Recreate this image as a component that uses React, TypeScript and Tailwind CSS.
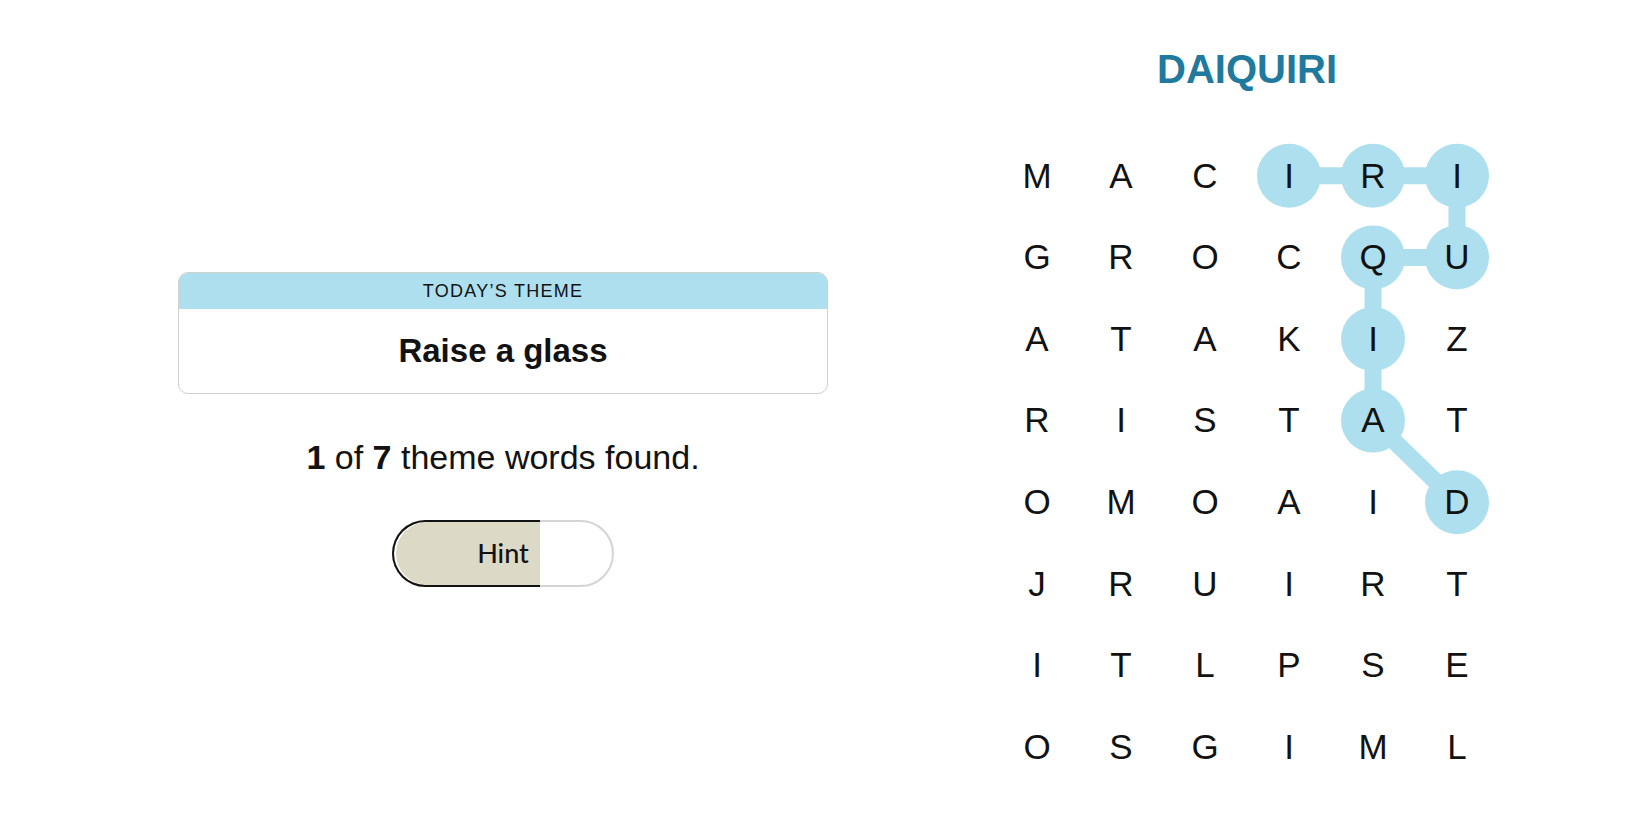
import React from 'react'

const GRID = [
  'MACIRI',
  'GROCQU',
  'ATAKIZ',
  'RISTAT',
  'OMOAID',
  'JRUIRT',
  'ITLPSE',
  'OSGIML',
]

const CW = 84
const RH = 81.6

// path of the found word DAIQUIRI as [row, col]
const FOUND: [number, number][] = [
  [4, 5], [3, 4], [2, 4], [1, 4], [1, 5], [0, 5], [0, 4], [0, 3],
]

const cx = (c: number) => c * CW + CW / 2
const cy = (r: number) => r * RH + RH / 2

function WordPath() {
  return (
    <svg className="absolute inset-0 pointer-events-none" width={CW * 6} height={RH * 8}>
      {FOUND.slice(1).map(([r, c], i) => {
        const [pr, pc] = FOUND[i]
        return <line key={i} x1={cx(pc)} y1={cy(pr)} x2={cx(c)} y2={cy(r)} stroke="#aedfee" strokeWidth={17} />
      })}
      {FOUND.map(([r, c], i) => (
        <circle key={i} cx={cx(c)} cy={cy(r)} r={32} fill="#aedfee" />
      ))}
    </svg>
  )
}

export default function App() {
  return (
    <div className="w-full h-[825px] bg-white flex text-[#121212] font-['Liberation_Sans',Arial,sans-serif]">
      {/* left: theme + hint */}
      <div className="pl-[178px] pt-[272px] w-[995px] shrink-0">
        <div className="w-[650px] flex flex-col items-center">
          <div className="w-full rounded-[10px] border border-[#cfcfcf] overflow-hidden">
            <div className="h-[36px] bg-[#aedfee] flex items-center justify-center text-[18px] tracking-[0.07em] font-medium">
              TODAY’S THEME
            </div>
            <div className="h-[84px] flex items-center justify-center text-[33px] font-bold">
              Raise a glass
            </div>
          </div>
          <div className="mt-[43px] h-[40px] leading-[40px] text-[34px]">
            <b>1</b> of <b>7</b> theme words found.
          </div>
          <button className="relative mt-[43px] w-[222px] h-[67px] rounded-full border-2 border-[#d4d4d4] bg-white">
            <div className="absolute -left-[2px] -top-[2px] -bottom-[2px] w-[148px] rounded-l-full border-2 border-r-0 border-[#121212] bg-[#dcdac6] shadow-[inset_2px_0_0_white]" />
            <span className="relative text-[27px] font-medium font-['Lato',sans-serif]">Hint</span>
          </button>
        </div>
      </div>

      {/* right: puzzle */}
      <div className="w-[504px] flex flex-col items-center">
        <div className="mt-[45px] h-[48px] leading-[48px] text-[40px] font-bold text-[#1f7a9e]">DAIQUIRI</div>
        <div className="relative mt-[42px] w-[504px]">
          <WordPath />
          <div className="relative grid grid-cols-6">
            {GRID.map((row, r) =>
              row.split('').map((ch, c) => (
                <div key={`${r}-${c}`} className="h-[81.6px] flex items-center justify-center text-[35px]">
                  {ch}
                </div>
              )),
            )}
          </div>
        </div>
      </div>
    </div>
  )
}
